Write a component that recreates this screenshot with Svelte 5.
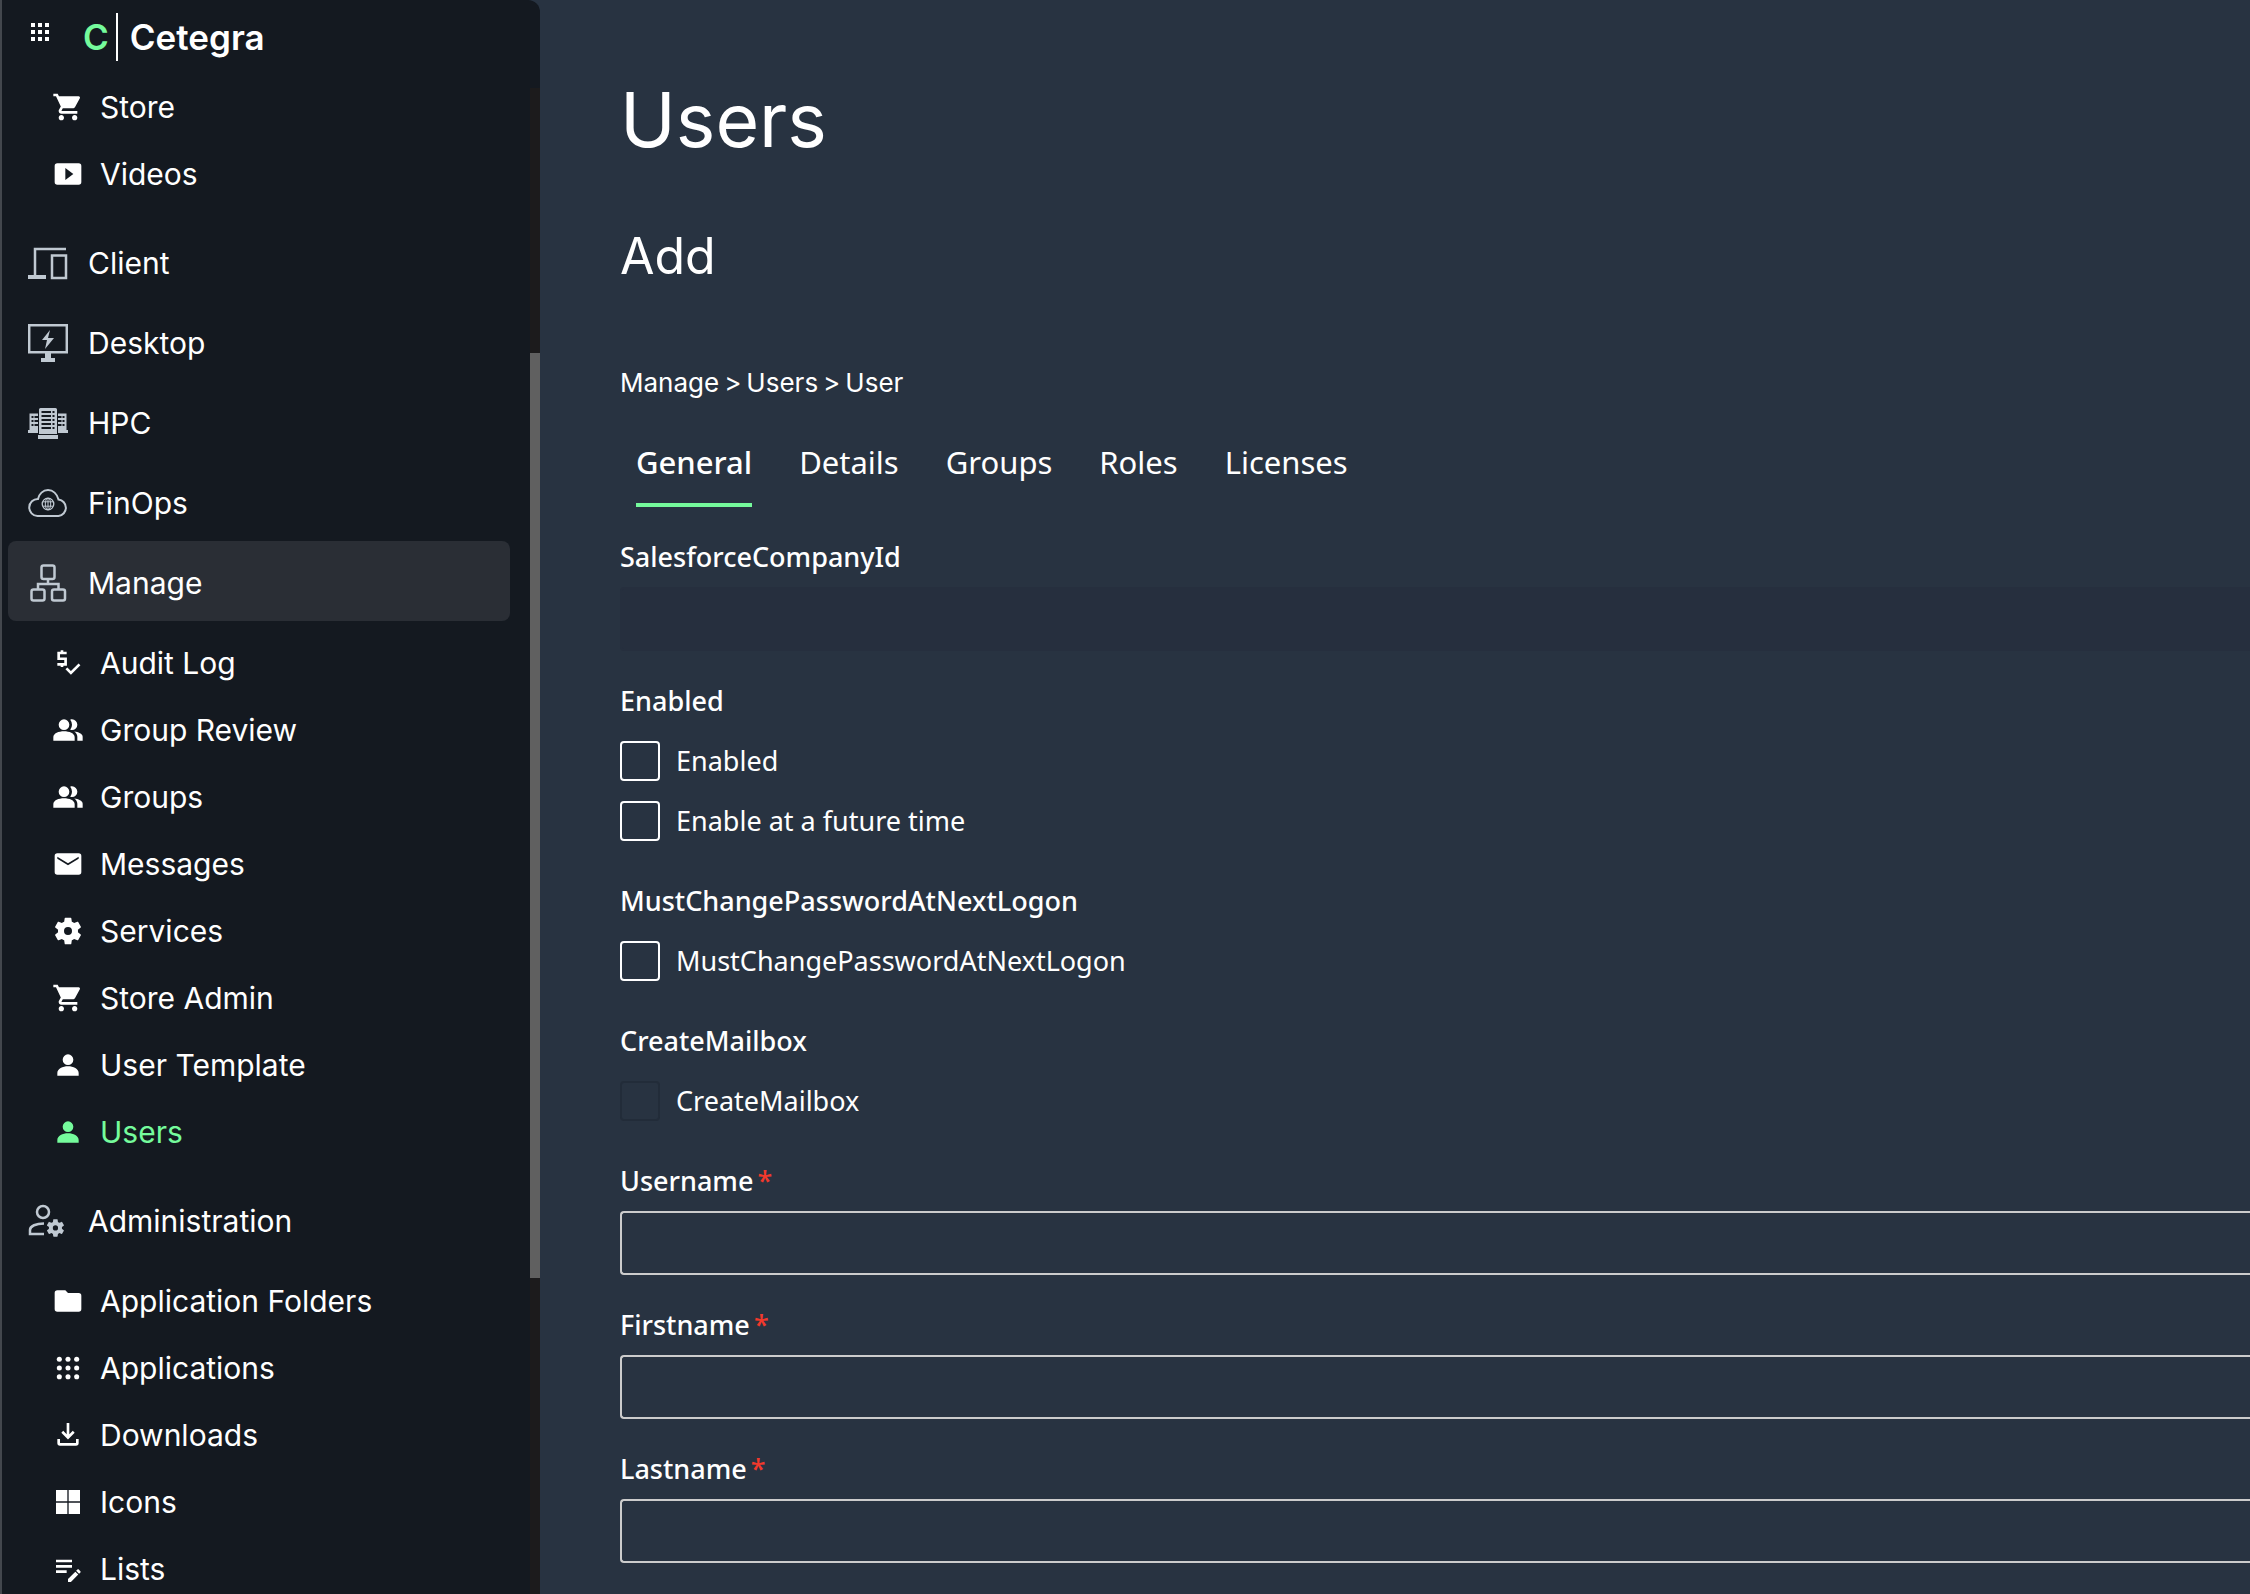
<script lang="ts">
	type NavItem = { label: string; icon: string };
	type NavSection = NavItem & { items?: NavItem[] };

	const pinnedItems: NavItem[] = [
		{ label: 'Store', icon: 'cart' },
		{ label: 'Videos', icon: 'video' }
	];

	const sections: NavSection[] = [
		{ label: 'Client', icon: 'devices' },
		{ label: 'Desktop', icon: 'desktop' },
		{ label: 'HPC', icon: 'servers' },
		{ label: 'FinOps', icon: 'cloud' },
		{
			label: 'Manage',
			icon: 'sitemap',
			items: [
				{ label: 'Audit Log', icon: 'audit' },
				{ label: 'Group Review', icon: 'group' },
				{ label: 'Groups', icon: 'group' },
				{ label: 'Messages', icon: 'mail' },
				{ label: 'Services', icon: 'gear' },
				{ label: 'Store Admin', icon: 'cart' },
				{ label: 'User Template', icon: 'person' },
				{ label: 'Users', icon: 'person' }
			]
		},
		{
			label: 'Administration',
			icon: 'admin',
			items: [
				{ label: 'Application Folders', icon: 'folder' },
				{ label: 'Applications', icon: 'dots' },
				{ label: 'Downloads', icon: 'download' },
				{ label: 'Icons', icon: 'tiles' },
				{ label: 'Lists', icon: 'list' }
			]
		}
	];

	const tabs = ['General', 'Details', 'Groups', 'Roles', 'Licenses'];
	const requiredFields = ['Username', 'Firstname', 'Lastname'];

	// single-path icons on a 24x24 grid
	const icons: Record<string, string> = {
		cart: 'M7 18c-1.100 0-1.990.9-1.990 2S5.900 22 7 22s2-.9 2-2-.9-2-2-2zM1 2v2h2l3.600 7.590-1.350 2.450c-.16.280-.25.610-.25.960 0 1.100.9 2 2 2h12v-2H7.420c-.14 0-.25-.11-.25-.25l.03-.12.9-1.630h7.450c.75 0 1.410-.41 1.750-1.030l3.580-6.490A1 1 0 0 0 20 4H5.210l-.94-2H1zm16 16c-1.100 0-1.990.9-1.990 2s.89 2 1.990 2 2-.9 2-2-.9-2-2-2z',
		video: 'M4 4h16a2 2 0 0 1 2 2v12a2 2 0 0 1-2 2H4a2 2 0 0 1-2-2V6a2 2 0 0 1 2-2zm6 3.500v9l6-4.500z',
		group: 'M9 12a4 4 0 1 0 0-8 4 4 0 0 0 0 8zM1 20v-2.500C1 14.500 5 13 9 13s8 1.500 8 4.500V20zM16.700 13.130C18 14.100 19 15.400 19 17v3h4v-3c0-2.200-3.400-3.500-6.300-3.870zM15 12a4 4 0 0 0 0-8c-.47 0-.91.1-1.330.24a5.980 5.980 0 0 1 0 7.520c.42.140.86.240 1.330.24z',
		mail: 'M20 4H4a2 2 0 0 0-2 2v12a2 2 0 0 0 2 2h16a2 2 0 0 0 2-2V6a2 2 0 0 0-2-2zm0 4-8 5-8-5V6.500l8 5 8-5z',
		gear: 'M19.500 12c0-.34-.03-.66-.07-.98l2.110-1.650c.19-.15.240-.42.12-.64l-2-3.460c-.12-.22-.39-.3-.61-.22l-2.490 1c-.52-.4-1.080-.73-1.690-.98l-.38-2.650A.49.490 0 0 0 14 2h-4c-.25 0-.46.180-.49.420l-.38 2.650c-.61.250-1.170.590-1.690.980l-2.490-1c-.23-.09-.49 0-.61.220l-2 3.460c-.13.220-.07.490.12.640l2.110 1.650c-.04.320-.07.650-.07.980s.03.660.07.980l-2.110 1.650c-.19.150-.24.420-.12.640l2 3.460c.12.220.39.300.61.220l2.490-1c.52.400 1.080.730 1.690.980l.38 2.650c.03.240.24.420.49.420h4c.25 0 .46-.18.49-.42l.38-2.650c.61-.25 1.170-.59 1.690-.98l2.490 1c.23.090.49 0 .61-.22l2-3.460c.12-.22.07-.49-.12-.64l-2.110-1.650c.04-.32.070-.65.070-.98zM12 15a3 3 0 1 1 0-6 3 3 0 0 1 0 6z',
		person: 'M12 12a4 4 0 1 0 0-8 4 4 0 0 0 0 8zm0 1c-4 0-8 2-8 5v2h16v-2c0-3-4-5-8-5z',
		folder: 'M10 4H4a2 2 0 0 0-2 2v12a2 2 0 0 0 2 2h16a2 2 0 0 0 2-2V8a2 2 0 0 0-2-2h-8z',
		download: 'M11 3h2v8.500l2.600-2.600L17 10.300l-5 5-5-5 1.400-1.400 2.600 2.600zM4 15h2v3h12v-3h2v3a2 2 0 0 1-2 2H6a2 2 0 0 1-2-2z',
		tiles: 'M3 3h8.500v8.500H3zM12.500 3H21v8.500h-8.500zM3 12.500h8.500V21H3zM12.500 12.500H21V21h-8.500z',
		list: 'M3 5h12v2H3zM3 9h12v2H3zM3 13h8v2H3zM12 19.500l5.500-5.500 2.200 2.200-5.500 5.500H12zM20.300 15.600l-2.200-2.200 1-1c.3-.3.700-.3 1 0l1.200 1.200c.3.300.3.700 0 1z'
	};
</script>

{#snippet navIcon(name: string)}
	<svg viewBox="0 0 24 24" aria-hidden="true">
		{#if name === 'dots'}
			{#each [5.5, 12, 18.5] as cy}
				{#each [5.5, 12, 18.5] as cx}
					<circle {cx} {cy} r="1.9" fill="currentColor" />
				{/each}
			{/each}
		{:else if name === 'audit'}
			<path d="M11 4.500H5v4.300h5.200v4.200H4M7.500 2.500v2M7.500 13v2" fill="none" stroke="currentColor" stroke-width="2" />
			<path d="M10.800 16l3.400 3.400 6.400-6.400" fill="none" stroke="currentColor" stroke-width="2" />
		{:else}
			<path d={icons[name]} fill="currentColor" fill-rule="evenodd" />
		{/if}
	</svg>
{/snippet}

{#snippet sectionIcon(name: string)}
	<svg viewBox="0 0 40 40" fill="none" stroke="currentColor" stroke-width="2.500" aria-hidden="true">
		{#if name === 'devices'}
			<path d="M38 6H7v27" />
			<path d="M0 34h18" stroke-width="4" />
			<path d="M24 12.500h14V35H24z" />
		{:else if name === 'desktop'}
			<path d="M1.200 2.200h37.600v27H1.200z" />
			<path d="M17 29h6v6h4v4H13v-4h4zM22 7l-8 10h5l-2 9 9-11h-6z" fill="currentColor" stroke="none" />
		{:else if name === 'servers'}
			<g stroke="none">
				<path d="M1.500 10.500H10V30H0v-3h1.500zM38.500 10.500H30V30h10v-3h-1.500zM12.500 5h15a1.500 1.500 0 0 1 1.500 1.500V31H11V6.500A1.500 1.500 0 0 1 12.500 5zM10 32h20v4H10z" fill="currentColor" />
				<g class="slots">
					{#each [8, 12, 16, 20, 24] as y}
						<rect x="13.500" {y} width="9.500" height="2" />
						<rect x="24.500" {y} width="2" height="2" />
					{/each}
					{#each [13, 17, 21] as y}
						<path d="M3.500 {y}h2v2h-2zM6.500 {y}H10v2H6.500zM30 {y}h3.500v2H30zM34.500 {y}h2v2h-2z" />
					{/each}
				</g>
			</g>
		{:else if name === 'cloud'}
			<path d="M9.500 33a8.500 8.500 0 0 1 .5-17C11 11 15 7 20 7s9 4 10.500 9.500A8.300 8.300 0 0 1 30.500 33z" stroke-width="2" />
			<circle cx="20" cy="21" r="5.800" stroke-width="1.300" />
			<ellipse cx="20" cy="21" rx="2.700" ry="5.800" stroke-width="1" />
			<path d="M15 18.800h10M15 23.200h10M20 15.200v11.600" stroke-width="1" />
		{:else if name === 'sitemap'}
			<rect x="13.500" y="2.500" width="13" height="13.500" rx="2" />
			<rect x="3.500" y="26.500" width="13" height="11" rx="2" />
			<rect x="24" y="26.500" width="13" height="11" rx="2" />
			<path d="M20 16v5M10 26v-5h20.500v5" />
		{:else}
			<circle cx="15" cy="11" r="6" />
			<path d="M16 22.500C8 22.500 2 25 2 29v4h14" />
			<path
				d={icons.gear}
				transform="translate(17 16.500) scale(.87)"
				fill="currentColor"
				fill-rule="evenodd"
				stroke="none"
			/>
		{/if}
	</svg>
{/snippet}

{#snippet subList(items: NavItem[])}
	<ul class="sub-list">
		{#each items as item (item.label)}
			<li>
				<a href="#{item.label}" class="sub-link" class:active={item.label === 'Users'}>
					{@render navIcon(item.icon)}
					<span>{item.label}</span>
				</a>
			</li>
		{/each}
	</ul>
{/snippet}

<div class="app">
	<aside class="sidebar">
		<div class="brand">
			<button class="launcher" aria-label="Apps">
				<svg viewBox="0 0 18 18" aria-hidden="true">
					{#each [0, 7, 14] as y}
						{#each [0, 7, 14] as x}
							<rect {x} {y} width="4" height="4" fill="currentColor" />
						{/each}
					{/each}
				</svg>
			</button>
			<a class="logo" href="#home">
				<span class="logo-mark">C</span>
				<span class="logo-name">Cetegra</span>
			</a>
		</div>

		<nav>
			{@render subList(pinnedItems)}
			{#each sections as section (section.label)}
				<a href="#{section.label}" class="section-link" class:open={section.label === 'Manage'}>
					{@render sectionIcon(section.icon)}
					<span>{section.label}</span>
				</a>
				{#if section.items}
					{@render subList(section.items)}
				{/if}
			{/each}
		</nav>
		<div class="scroll-track"><div class="scroll-thumb"></div></div>
	</aside>

	<main>
		<h1>Users</h1>
		<h2>Add</h2>

		<div class="breadcrumb">
			<a href="#manage">Manage</a>
			<span>&gt;</span>
			<a href="#users">Users</a>
			<span>&gt;</span>
			<a href="#user">User</a>
		</div>

		<div class="tabs" role="tablist">
			{#each tabs as tab, i}
				<button role="tab" class="tab" class:selected={i === 0} aria-selected={i === 0}>{tab}</button>
			{/each}
		</div>

		<form>
			<div class="field">
				<label class="title" for="company">SalesforceCompanyId</label>
				<input id="company" type="text" disabled />
			</div>

			<fieldset>
				<legend class="title">Enabled</legend>
				<label class="check"><input type="checkbox" />Enabled</label>
				<label class="check"><input type="checkbox" />Enable at a future time</label>
			</fieldset>

			<fieldset>
				<legend class="title">MustChangePasswordAtNextLogon</legend>
				<label class="check"><input type="checkbox" />MustChangePasswordAtNextLogon</label>
			</fieldset>

			<fieldset>
				<legend class="title">CreateMailbox</legend>
				<label class="check"><input type="checkbox" disabled />CreateMailbox</label>
			</fieldset>

			{#each requiredFields as name}
				<div class="field">
					<label class="title" for={name}>{name}<span class="required">*</span></label>
					<input id={name} type="text" required />
				</div>
			{/each}
		</form>
	</main>
</div>

<style>
	:global(body) {
		background: #283341;
	}

	.app {
		display: flex;
		height: 100vh;
		overflow: hidden;
		color: #fff;
		font-family: 'Inter', sans-serif;
	}

	a {
		color: inherit;
		text-decoration: none;
	}

	button {
		background: none;
		border: 0;
		padding: 0;
		color: inherit;
		cursor: pointer;
	}

	.sidebar {
		position: relative;
		flex: 0 0 540px;
		box-sizing: border-box;
		border-left: 2px solid #43474d;
		border-top-right-radius: 12px;
		background: #141920;
		overflow: hidden;
	}

	.brand {
		display: flex;
		align-items: flex-start;
		gap: 34px;
		height: 65px;
		padding: 13px 0 0 29px;
		box-sizing: border-box;
	}

	.launcher {
		margin-top: 10px;
	}

	.launcher svg {
		display: block;
		width: 18px;
		height: 18px;
	}

	.logo {
		display: flex;
		align-items: center;
		font-size: 35px;
		line-height: 48px;
		font-weight: 600;
	}

	.logo-mark {
		padding-right: 7px;
		border-right: 2px solid #fff;
		color: #75fb9c;
	}

	.logo-name {
		padding-left: 12px;
	}

	.sub-list {
		list-style: none;
		margin: 8px 0 14px;
		padding: 0;
	}

	.sub-link {
		display: flex;
		align-items: center;
		gap: 16px;
		height: 67px;
		padding-left: 50px;
		font-size: 30px;
	}

	.sub-link.active {
		color: #75fb9c;
	}

	.sub-link svg {
		width: 32px;
		height: 32px;
	}

	.section-link {
		display: flex;
		align-items: center;
		gap: 20px;
		height: 80px;
		margin: 0 30px 0 6px;
		padding: 4px 0 0 20px;
		box-sizing: border-box;
		border-radius: 8px;
		font-size: 30px;
	}

	.section-link.open {
		background: #2a2e35;
	}

	.section-link svg {
		width: 40px;
		height: 40px;
		color: #c0c9d2;
	}

	.slots {
		fill: #141920;
	}

	.scroll-track {
		position: absolute;
		top: 88px;
		right: 0;
		bottom: 0;
		width: 10px;
		background: #1c1b1c;
	}

	.scroll-thumb {
		height: 58vh;
		margin-top: 265px;
		background: #606060;
	}

	main {
		flex: 1;
		min-width: 0;
		padding: 80px 0 0 80px;
		background: #283341;
	}

	h1 {
		margin: 0;
		font-size: 75px;
		line-height: 80px;
		font-weight: 400;
	}

	h2 {
		margin: 64px 0 0;
		font-size: 50px;
		line-height: 64px;
		font-weight: 400;
	}

	.breadcrumb {
		display: flex;
		gap: 5px;
		margin-top: 75px;
		font-size: 26px;
		line-height: 40px;
	}

	.tabs {
		display: flex;
		gap: 47px;
		margin: 28px 0 30px 16px;
	}

	.tab {
		padding: 11px 0 21px;
		border-bottom: 4px solid transparent;
		font-family: 'Noto Sans', sans-serif;
		font-size: 31px;
		line-height: 40px;
	}

	.tab.selected {
		border-color: #75fb9c;
		font-weight: 500;
	}

	form {
		font-family: 'Noto Sans', sans-serif;
		font-size: 27px;
		line-height: 40px;
	}

	.field {
		margin-bottom: 30px;
	}

	.title {
		display: block;
		padding: 0;
		font-weight: 500;
	}

	.required {
		margin-left: 4px;
		color: #f2392c;
	}

	input[type='text'] {
		display: block;
		width: 100%;
		height: 64px;
		margin-top: 10px;
		padding: 0 20px;
		box-sizing: border-box;
		border: 2px solid #ccc;
		border-right: 0;
		border-radius: 4px 0 0 4px;
		background: transparent;
		color: inherit;
		font: inherit;
	}

	input[type='text']:disabled {
		border-color: #262f3e;
		background: #262f3e;
	}

	fieldset {
		margin: 0 0 40px;
		padding: 0;
		border: 0;
	}

	.check {
		display: flex;
		align-items: center;
		gap: 16px;
		margin-top: 20px;
	}

	input[type='checkbox'] {
		appearance: none;
		width: 40px;
		height: 40px;
		margin: 0;
		border: 2px solid #fff;
		border-radius: 4px;
	}

	input[type='checkbox']:disabled {
		border-color: #222c39;
	}
</style>
